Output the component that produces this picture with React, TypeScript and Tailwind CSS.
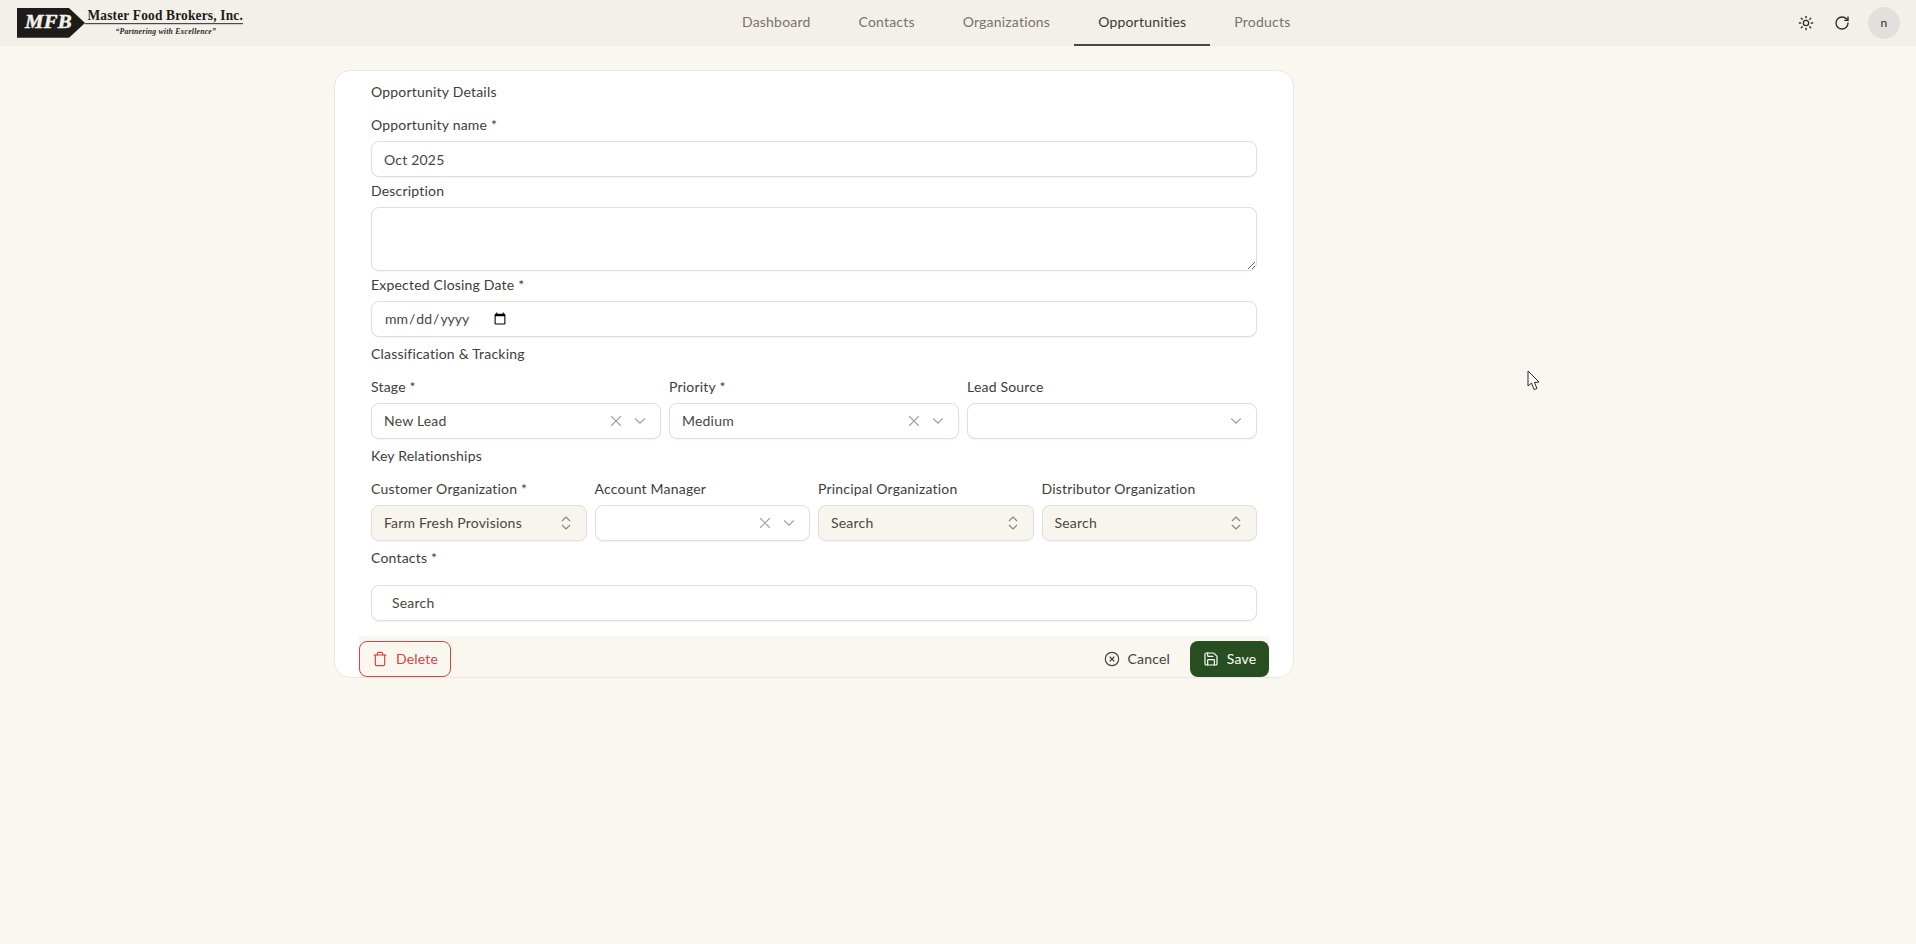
import { X, ChevronDown, ChevronsUpDown, Sun, RotateCw, Trash, CircleX, Save } from "lucide-react";

function Logo() {
  return (
    <svg width="260" height="40" viewBox="0 -5 260 40" className="block">
      <polygon points="0,0 52,0 68,15 52,29.7 0,29.7" fill="#1c1c1a" />
      <text x="8" y="20" fill="#f3f0e9" stroke="#f3f0e9" strokeWidth="0.5" fontFamily="Liberation Serif, serif" fontWeight="700" fontStyle="italic" fontSize="19" textLength="47" lengthAdjust="spacingAndGlyphs">MFB</text>
      <text x="70.5" y="11.5" fill="#1c1c1a" fontFamily="Liberation Serif, serif" fontWeight="700" fontSize="14" textLength="155.5" lengthAdjust="spacingAndGlyphs">Master Food Brokers, Inc.</text>
      <rect x="68" y="15" width="158" height="1.2" fill="#4a4a48" />
      <text x="98.5" y="26" fill="#2a2a28" fontFamily="Liberation Serif, serif" fontWeight="700" fontStyle="italic" fontSize="8" textLength="100.5" lengthAdjust="spacingAndGlyphs">“Partnering with Excellence”</text>
    </svg>
  );
}

function Tab({ label, active }: { label: string; active?: boolean }) {
  return (
    <div
      className={
        active
          ? "h-[46px] px-6 flex items-center border-b-2 border-[#4a463e] text-[#3d3a36]"
          : "h-[46px] px-6 flex items-center border-b-2 border-transparent text-[#78736c]"
      }
    >
      {label}
    </div>
  );
}

function Label({ children }: { children: React.ReactNode }) {
  return <div className="h-5 leading-5 text-sm text-[#403d3a]">{children}</div>;
}

function Field({ label, children }: { label: string; children: React.ReactNode }) {
  return (
    <div className="flex flex-col gap-[6px] min-w-0">
      <Label>{label}</Label>
      {children}
    </div>
  );
}

function Select({ value, clear }: { value?: string; clear?: boolean }) {
  return (
    <div className="h-9 flex items-center bg-white border border-[#e2dfda] rounded-lg shadow-xs pl-3 pr-[11px] text-sm text-[#4a4642]">
      <span className="flex-1 truncate">{value}</span>
      {clear && <X size={18} strokeWidth={1.5} className="text-[#a5a19c] mr-[6px]" />}
      <ChevronDown size={18} strokeWidth={1.5} className="text-[#a5a19c]" />
    </div>
  );
}

function Combo({ value }: { value: string }) {
  return (
    <div className="h-9 flex items-center bg-[#f8f5ef] border border-[#e2dfda] rounded-lg shadow-xs pl-3 pr-[11px] text-sm text-[#4a4642]">
      <span className="flex-1 truncate">{value}</span>
      <ChevronsUpDown size={18} strokeWidth={1.5} className="text-[#8a8680]" />
    </div>
  );
}

const inputClass =
  "block w-full h-9 bg-white border border-[#e2dfda] rounded-lg shadow-xs px-3 text-sm text-[#4a4642] outline-none";

export default function App() {
  return (
    <div className="relative min-h-screen bg-[#faf7f1] font-[family-name:Lato,sans-serif] text-sm tracking-[0.2px]">
      <header className="h-[46px] bg-[#f3f0e9] flex items-center pr-4">
        <div className="w-[718px] pl-[17px] shrink-0">
          <Logo />
        </div>
        <nav className="flex">
          <Tab label="Dashboard" />
          <Tab label="Contacts" />
          <Tab label="Organizations" />
          <Tab label="Opportunities" active />
          <Tab label="Products" />
        </nav>
        <div className="ml-auto flex items-center text-[#2e2c2a]">
          <Sun size={16} strokeWidth={2} />
          <RotateCw size={16} strokeWidth={2} className="ml-5" />
          <div className="ml-[18px] w-8 h-8 rounded-full bg-[#e2e0dc] flex items-center justify-center text-xs text-[#2c2a28]">
            n
          </div>
        </div>
      </header>

      <main className="ml-[334px] mt-6 w-[960px] h-[608px] bg-white border border-[#ebe8e2] rounded-2xl px-6 pt-[11px] flex flex-col">
        <div className="px-3 flex flex-col">
          <Label>Opportunity Details</Label>
          <div className="mt-[13px] flex flex-col gap-1">
            <Field label="Opportunity name *">
              <input readOnly value="Oct 2025" className={inputClass} />
            </Field>
            <Field label="Description">
              <textarea readOnly className="block w-full h-16 bg-white border border-[#e2dfda] rounded-lg shadow-xs px-3 py-2 text-sm outline-none" />
            </Field>
            <Field label="Expected Closing Date *">
              <input
                type="date"
                className={inputClass + " tracking-normal [&::-webkit-datetime-edit]:flex-none"}
              />
            </Field>
          </div>
          <div className="mt-[7px]">
            <Label>Classification &amp; Tracking</Label>
          </div>
          <div className="mt-[13px] grid grid-cols-3 gap-2">
            <Field label="Stage *">
              <Select value="New Lead" clear />
            </Field>
            <Field label="Priority *">
              <Select value="Medium" clear />
            </Field>
            <Field label="Lead Source">
              <Select />
            </Field>
          </div>
          <div className="mt-[7px]">
            <Label>Key Relationships</Label>
          </div>
          <div className="mt-[13px] grid grid-cols-4 gap-2">
            <Field label="Customer Organization *">
              <Combo value="Farm Fresh Provisions" />
            </Field>
            <Field label="Account Manager">
              <Select clear />
            </Field>
            <Field label="Principal Organization">
              <Combo value="Search" />
            </Field>
            <Field label="Distributor Organization">
              <Combo value="Search" />
            </Field>
          </div>
          <div className="mt-[7px]">
            <Label>Contacts *</Label>
          </div>
          <div className="mt-[17px] h-9 flex items-center bg-white border border-[#e2dfda] rounded-lg shadow-xs pl-5 text-sm text-[#4a4642]">
            Search
          </div>
        </div>

        <footer className="mt-[15px] flex-1 bg-[#faf7f1] pt-[5px] flex items-start justify-between">
          <button className="h-9 w-[92px] flex items-center justify-center gap-2 border border-[#d9443f] rounded-lg text-[#d4453f]">
            <Trash size={16} strokeWidth={1.75} />
            Delete
          </button>
          <div className="flex items-center">
            <button className="h-9 flex items-center gap-[7px] text-[#45413c] mr-5">
              <CircleX size={16} strokeWidth={1.75} />
              Cancel
            </button>
            <button className="h-9 w-[79px] flex items-center justify-center gap-2 bg-[#274e20] text-white rounded-lg">
              <Save size={16} strokeWidth={1.75} />
              Save
            </button>
          </div>
        </footer>
      </main>

      <svg width="13" height="21" viewBox="0 0 13 21" className="absolute left-[1527px] top-[370px]">
        <path d="M1 1 L1 16 L4.5 13 L7 19.5 L10 18.5 L7.5 12.5 L12 12 Z" fill="#fff" stroke="#2a2a2a" strokeWidth="1" strokeLinejoin="round" />
      </svg>
    </div>
  );
}
